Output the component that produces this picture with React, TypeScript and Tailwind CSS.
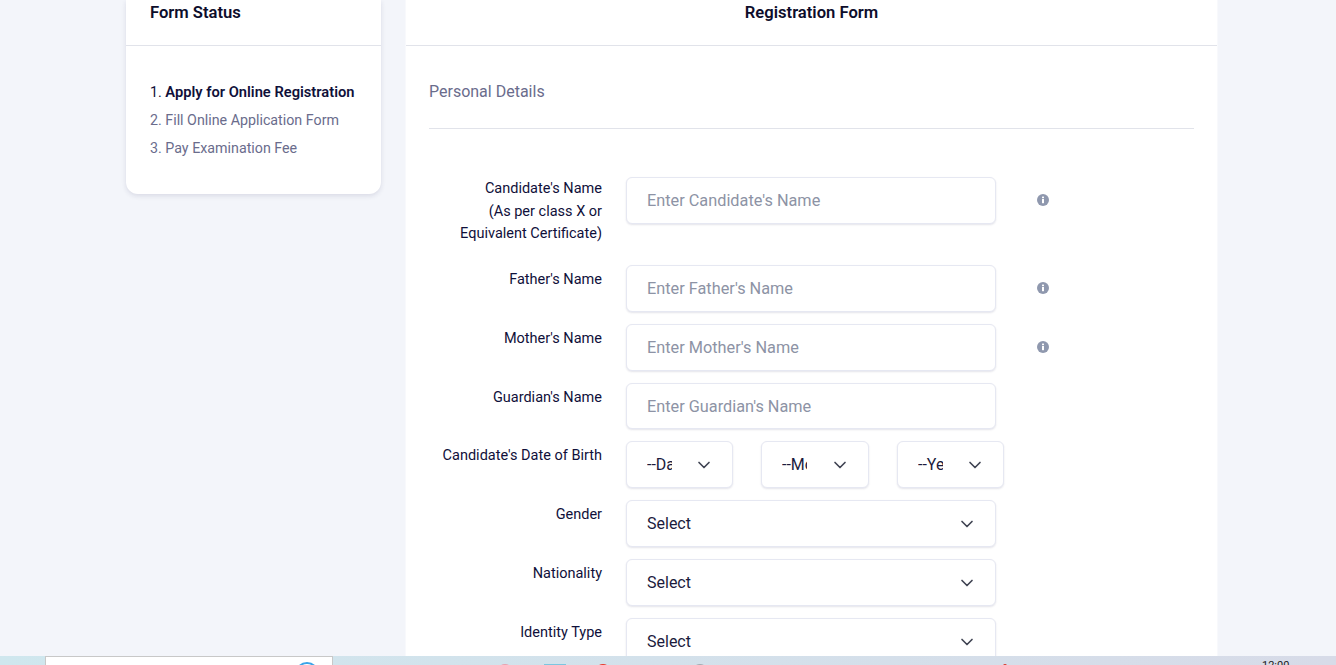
import { ChevronDown } from "lucide-react";

const FONT = "font-['Roboto','Liberation_Sans',sans-serif]";

// shared box look for inputs and selects
const BOX = "bg-white border border-[#e6e8f2] rounded-[6px] shadow-[0_1px_2px_rgba(30,30,80,0.12)] flex items-center";

function InfoDot() {
  return (
    <svg width="12" height="12" viewBox="0 0 12 12" className="ml-[41px] -mt-px shrink-0">
      <circle cx="6" cy="6" r="6" fill="#8f98ae" />
      <rect x="5" y="5" width="2" height="4.2" fill="#fff" />
      <rect x="5" y="2.6" width="2" height="1.6" fill="#fff" />
    </svg>
  );
}

function Row({ label, short, children }: { label: React.ReactNode; short?: boolean; children: React.ReactNode }) {
  return (
    <div className="flex mb-3">
      <div className="w-[173px] pt-1 text-right text-[14.5px] leading-[22.5px] text-[#10103a]">{label}</div>
      <div className={`ml-6 flex items-center ${short ? "h-[46px]" : "h-[47px]"}`}>{children}</div>
    </div>
  );
}

function TextBox({ placeholder, info, short }: { placeholder: string; info?: boolean; short?: boolean }) {
  return (
    <>
      <div className={`${BOX} ${short ? "h-[46px] pt-[2px]" : "h-[47px] pt-px"} w-[370px] pl-5 text-[16.3px] text-[#8d93a5]`}>
        {placeholder}
      </div>
      {info && <InfoDot />}
    </>
  );
}

function SelectBox({ text = "Select" }: { text?: string }) {
  return (
    <div className={`${BOX} h-[47px] w-[370px] pl-5 pr-[18px] justify-between text-[16px] text-[#1b1b3d]`}>
      <span className="pt-px">{text}</span>
      <ChevronDown size={20} strokeWidth={2} className="text-[#3f4352]" />
    </div>
  );
}

function DatePart({ text, width }: { text: string; width: string }) {
  return (
    <div className={`${BOX} h-[47px] ${width} pl-5 pr-[18px] justify-between text-[16px] text-[#1b1b3d]`}>
      <span className="w-[25px] pt-px overflow-hidden whitespace-nowrap">{text}</span>
      <ChevronDown size={20} strokeWidth={2} className="text-[#3f4352]" />
    </div>
  );
}

export default function App() {
  return (
    <div className={`${FONT} h-[665px] w-[1336px] overflow-hidden flex flex-col bg-[#f3f5fa]`}>
      <div className="flex-1 min-h-0 flex pl-[126px] gap-6">
        {/* FORM STATUS */}
        <div className="w-[255px] h-[194px] bg-white rounded-b-[12px] shadow-[0_2px_5px_rgba(30,30,80,0.12)]">
          <div className="h-[46px] border-b border-[#e1e3ea] px-6 pt-[2px] text-[16.6px] leading-[22px] font-semibold text-[#0d0d2b]">
            Form Status
          </div>
          <div className="px-6 pt-[32px] text-[14.25px] leading-[28px] text-[#6a6c8c]">
            <div className="text-[#10103a] whitespace-nowrap">
              1. <span className="text-[14.7px] font-semibold">Apply for Online Registration</span>
            </div>
            <div>2. Fill Online Application Form</div>
            <div>3. Pay Examination Fee</div>
          </div>
        </div>

        {/* REGISTRATION FORM */}
        <div className="w-[813px] bg-white border-x border-[#f8f9fc]">
          <div className="h-[46px] border-b border-[#e1e3ea] pt-[2px] text-center text-[16.6px] leading-[22px] font-semibold text-[#0d0d2b]">
            Registration Form
          </div>
          <div className="px-[23px]">
            <div className="h-[83px] border-b border-[#e1e3ea] pt-[34px] text-[16px] leading-[24px] text-[#6a6c8c]">
              Personal Details
            </div>
            <div className="pt-[48px]">
              <div className="flex h-[76px] mb-3">
                <div className="w-[173px] pt-px text-right text-[14.5px] leading-[22.5px] whitespace-nowrap text-[#10103a]">
                  Candidate's Name
                  <br />
                  (As per class X or
                  <br />
                  Equivalent Certificate)
                </div>
                <div className="ml-6 flex items-center h-[47px]">
                  <TextBox placeholder="Enter Candidate's Name" info />
                </div>
              </div>
              <Row label="Father's Name">
                <TextBox placeholder="Enter Father's Name" info />
              </Row>
              <Row label="Mother's Name">
                <TextBox placeholder="Enter Mother's Name" info />
              </Row>
              <Row label="Guardian's Name" short>
                <TextBox placeholder="Enter Guardian's Name" short />
              </Row>
              <Row label="Candidate's Date of Birth">
                <div className="flex gap-7">
                  <DatePart text="--Day" width="w-[107px]" />
                  <DatePart text="--Month" width="w-[108px]" />
                  <DatePart text="--Year" width="w-[107px]" />
                </div>
              </Row>
              <Row label="Gender">
                <SelectBox />
              </Row>
              <Row label="Nationality">
                <SelectBox />
              </Row>
              <Row label="Identity Type">
                <SelectBox />
              </Row>
            </div>
          </div>
        </div>
      </div>

      {/* TASKBAR */}
      <div className="relative h-[9px] shrink-0 overflow-hidden bg-gradient-to-r from-[#cfe7ee] to-[#d7dbe8]">
        <div className="absolute left-[45px] top-0 w-[288px] h-[12px] bg-white border border-[#c8c8c8]">
          <div className="absolute left-[249px] top-[5px] w-6 h-6 rounded-full border-2 border-[#3aa4e8]" />
        </div>
        <div className="absolute left-[497px] top-[8px] w-4 h-4 rounded-full bg-[#e8a0ad]" />
        <div className="absolute left-[544px] top-[8px] w-[22px] h-4 bg-[#7cc6e0]" />
        <div className="absolute left-[595px] top-[8px] w-4 h-4 rounded-full bg-[#e8392b]" />
        <div className="absolute left-[692px] top-[8px] w-4 h-4 rounded-full bg-[#a4abb2]" />
        <div className="absolute left-[1003px] top-[8px] w-1 h-1 rounded-full bg-[#d8392b]" />
        <div className="absolute left-[1262px] top-[4px] text-[11px] leading-[12px] text-[#222]">12:00</div>
      </div>
    </div>
  );
}
